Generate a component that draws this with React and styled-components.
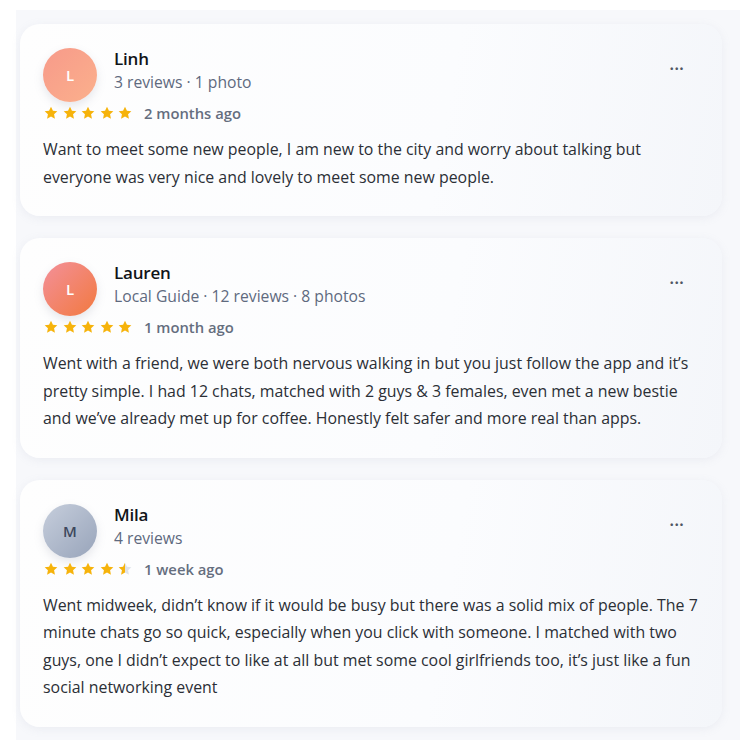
import styled, { createGlobalStyle } from 'styled-components';

const GlobalStyle = createGlobalStyle`
    html, body {
        margin: 0;
        padding: 0;
        background: #ffffff;
    }
    body {
        font-family: "Open Sans", "Noto Sans", "Liberation Sans", sans-serif;
        color: #2b2f36;
    }
`

const reviews = [
    {
        id: 1,
        name: "Linh",
        initial: "L",
        meta: "3 reviews · 1 photo",
        rating: 5,
        time: "2 months ago",
        avatar: "linear-gradient(135deg, #f79a8a, #fbb08c)",
        initialColor: "#ffffff",
        text: "Want to meet some new people, I am new to the city and worry about talking but everyone was very nice and lovely to meet some new people.",
    },
    {
        id: 2,
        name: "Lauren",
        initial: "L",
        meta: "Local Guide · 12 reviews · 8 photos",
        rating: 5,
        time: "1 month ago",
        avatar: "linear-gradient(135deg, #f3909a, #f2793f)",
        initialColor: "#ffffff",
        text: "Went with a friend, we were both nervous walking in but you just follow the app and it’s pretty simple. I had 12 chats, matched with 2 guys & 3 females, even met a new bestie and we’ve already met up for coffee. Honestly felt safer and more real than apps.",
    },
    {
        id: 3,
        name: "Mila",
        initial: "M",
        meta: "4 reviews",
        rating: 4.5,
        time: "1 week ago",
        avatar: "linear-gradient(135deg, #c6cedc, #98a4ba)",
        initialColor: "#3d475c",
        text: "Went midweek, didn’t know if it would be busy but there was a solid mix of people. The 7 minute chats go so quick, especially when you click with someone. I matched with two guys, one I didn’t expect to like at all but met some cool girlfriends too, it’s just like a fun social networking event",
    },
];

const STAR = "M12 2.5l2.9 6.1 6.6.8-4.9 4.6 1.3 6.6L12 17.3l-5.9 3.3 1.3-6.6-4.9-4.6 6.6-.8z";

const Star = ({ fill }) => (
    <svg width="16" height="16" viewBox="0 0 24 24">
        <defs>
            <linearGradient id="half">
                <stop offset="50%" stopColor="#f6b30b" />
                <stop offset="50%" stopColor="#dfe3ea" />
            </linearGradient>
        </defs>
        <path d={STAR} fill={fill === 1 ? "#f6b30b" : fill === 0.5 ? "url(#half)" : "#dfe3ea"} />
    </svg>
);

const Stars = ({ rating }) => (
    <StarRow>
        {[0, 1, 2, 3, 4].map((i) => (
            <Star key={i} fill={rating - i >= 1 ? 1 : rating - i > 0 ? 0.5 : 0} />
        ))}
    </StarRow>
);

const App = () => {
    return (
        <Page>
            <GlobalStyle />
            <List>
                {reviews.map((r) => (
                    <Card key={r.id}>
                        <Header>
                            <Avatar $bg={r.avatar} $color={r.initialColor}>{r.initial}</Avatar>
                            <Who>
                                <Name>{r.name}</Name>
                                <Meta>{r.meta}</Meta>
                            </Who>
                            <More>···</More>
                        </Header>
                        <RatingRow>
                            <Stars rating={r.rating} />
                            <Time>{r.time}</Time>
                        </RatingRow>
                        <Body>{r.text}</Body>
                    </Card>
                ))}
            </List>
        </Page>
    );
}

const Page = styled.div`
    width: 740px;
    min-height: 740px;
    padding-top: 10px;
    box-sizing: border-box;
`

const List = styled.div`
    margin-left: 16px;
    width: 724px;
    padding: 14px 0 14px 4px;
    box-sizing: border-box;
    background: #f7f8fb;
    display: flex;
    flex-direction: column;
    gap: 22px;
`

const Card = styled.div`
    width: 702px;
    box-sizing: border-box;
    padding: 24px 14px 25px 23px;
    border-radius: 20px;
    background: linear-gradient(100deg, #fefefe 0%, #fbfcfe 60%, #f4f6fa 100%);
    box-shadow: 0 2px 10px rgba(150, 160, 180, 0.12);
`

const Header = styled.div`
    display: flex;
    align-items: flex-start;
`

const Avatar = styled.div`
    width: 54px;
    height: 54px;
    border-radius: 50%;
    background: ${(p) => p.$bg};
    color: ${(p) => p.$color};
    display: flex;
    align-items: center;
    justify-content: center;
    font-size: 15px;
    font-weight: 600;
    box-shadow: 0 4px 10px rgba(120, 130, 150, 0.18);
    flex-shrink: 0;
`

const Who = styled.div`
    margin-left: 17px;
    display: flex;
    flex-direction: column;
    flex: 1;
`

const Name = styled.div`
    font-size: 17px;
    line-height: 22px;
    font-weight: 600;
    color: #111418;
    letter-spacing: -0.2px;
`

const Meta = styled.div`
    font-size: 15.7px;
    line-height: 24px;
    color: #5f6a7e;
`

const More = styled.div`
    margin-top: 8px;
    margin-right: 24px;
    font-size: 18px;
    font-weight: 600;
    color: #4f5765;
`

const RatingRow = styled.div`
    display: flex;
    align-items: center;
    margin-top: 3px;
    height: 16px;
`

const StarRow = styled.div`
    display: flex;
    gap: 2.5px;
`

const Time = styled.span`
    margin-left: 11px;
    font-size: 14.8px;
    font-weight: 600;
    color: #656e7e;
`

const Body = styled.p`
    margin: 15px 0 0;
    max-width: 658px;
    font-size: 15.9px;
    line-height: 27.5px;
    color: #2b2f36;
`

export default App;
